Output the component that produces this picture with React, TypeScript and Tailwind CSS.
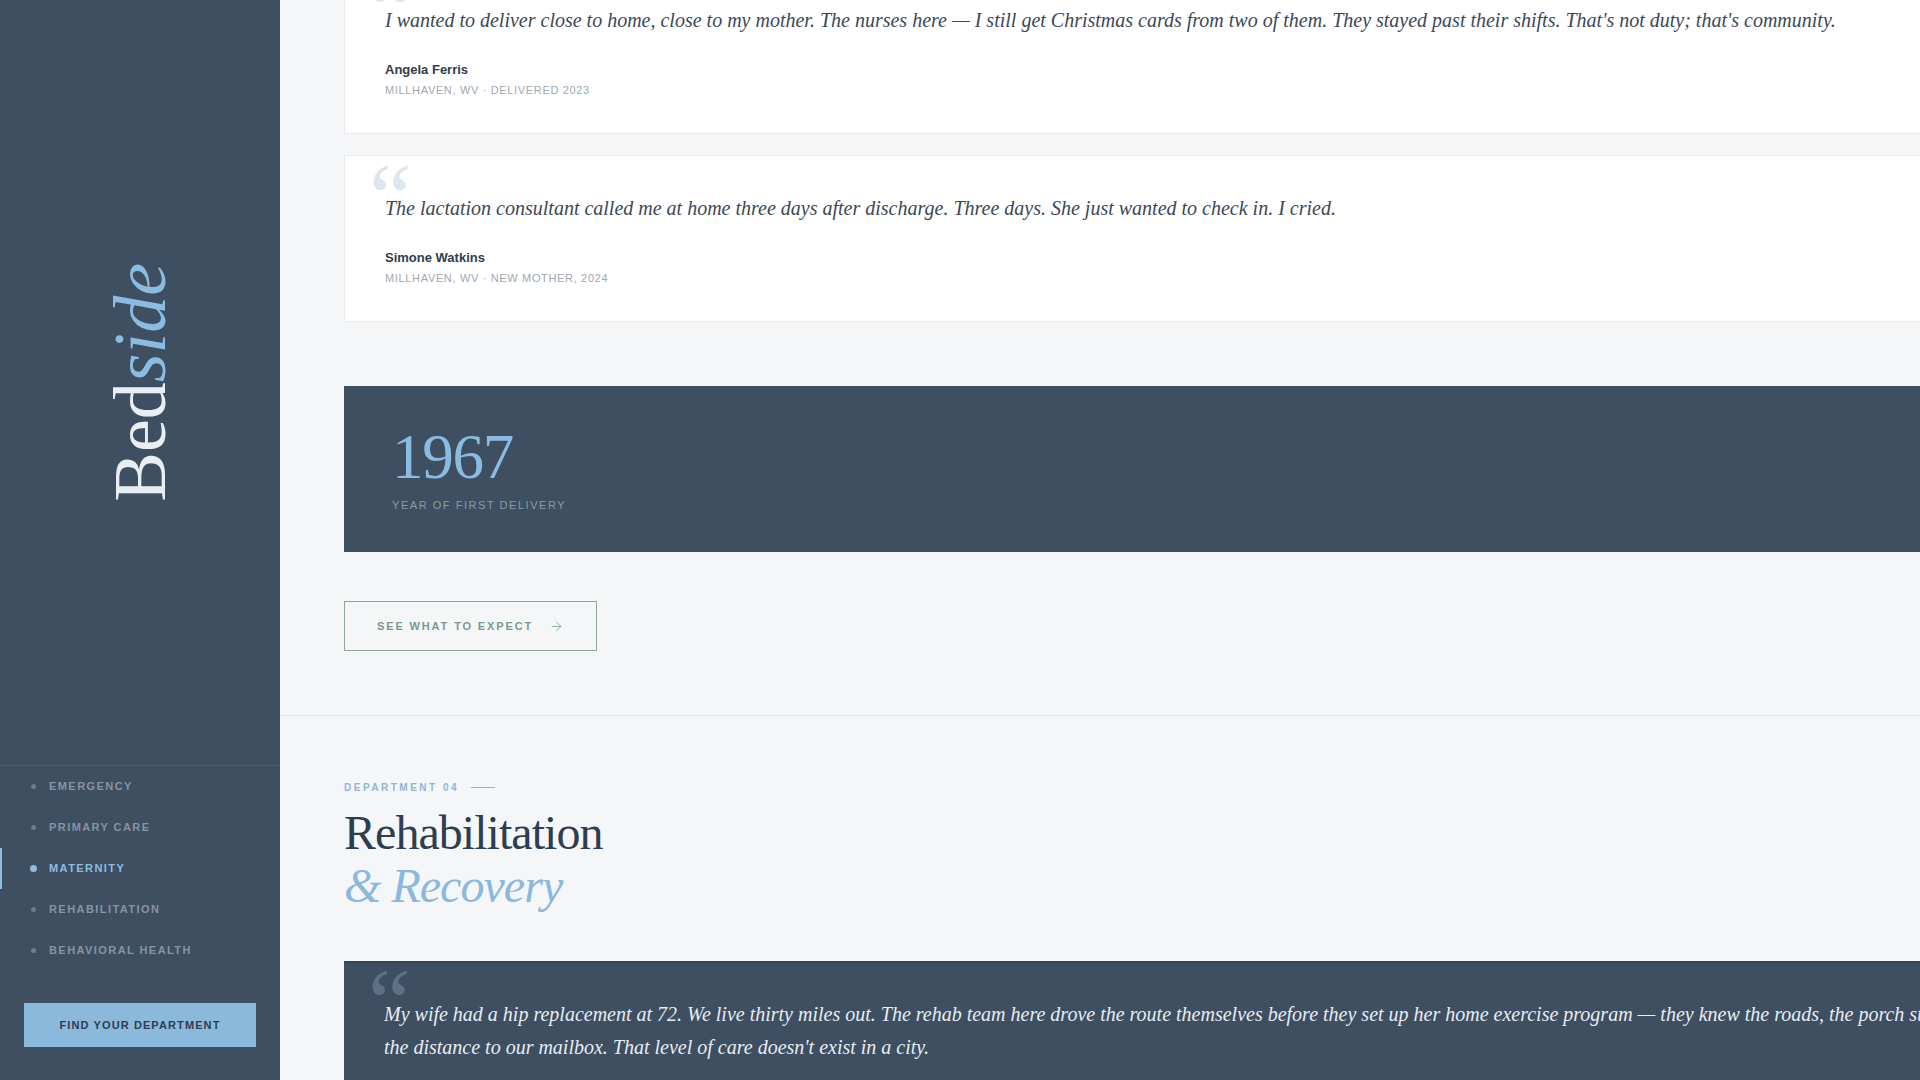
import React from "react";
import { ArrowRight } from "lucide-react";

const serif = "font-['Liberation_Serif',_'Times_New_Roman',_serif]";
const sans = "font-['Liberation_Sans',_Arial,_sans-serif]";

const navItems = [
  { label: "Emergency", active: false },
  { label: "Primary Care", active: false },
  { label: "Maternity", active: true },
  { label: "Rehabilitation", active: false },
  { label: "Behavioral Health", active: false },
];

function QuoteCard({ text, name, meta }: { text: string; name: string; meta: string }) {
  return (
    <div className="relative bg-white border border-[#e7eaee] px-10 pt-9 pb-[35px]">
      <span
        className={`${serif} absolute left-[24px] top-[-7px] text-[96px] leading-none text-[#dbe6f0] select-none`}
      >
        “
      </span>
      <p className={`${serif} relative italic text-[20px] leading-[33px] text-[#3b4857]`}>{text}</p>
      <div className={`${sans} mt-[23px] text-[13px] leading-5 font-bold text-[#2f3d4b]`}>{name}</div>
      <div className={`${sans} mt-0.5 text-[11px] leading-4 tracking-[0.06em] uppercase text-[#9ea8b2]`}>
        {meta}
      </div>
    </div>
  );
}

export default function App() {
  return (
    <div className={`${sans} flex h-screen w-full overflow-hidden bg-[#f4f6f8]`}>
      {/* Sidebar */}
      <aside className="flex w-[280px] shrink-0 flex-col bg-[#3d4f61]">
        <div className="flex flex-1 items-center justify-center border-b border-[#4b5d6f]">
          <div
            className={`${serif} rotate-180 text-[74px] leading-none [writing-mode:vertical-rl] text-[#e9eef2]`}
          >
            Bed<span className="italic text-[#8bbbe0]">side</span>
          </div>
        </div>
        <nav className="flex flex-col">
          {navItems.map((item) => (
            <div
              key={item.label}
              className={`relative flex h-[41px] items-center gap-3 pl-[29px] ${
                item.active ? "text-[#8cbde0]" : "text-[#8794a2]"
              }`}
            >
              {item.active && <span className="absolute left-0 top-0 h-full w-[2px] bg-[#8cbde0]" />}
              <span className="flex w-2 items-center justify-center">
                <span
                  className={
                    item.active
                      ? "h-[7px] w-[7px] rounded-full bg-[#8cbde0]"
                      : "h-[5px] w-[5px] rounded-full bg-[#6d7d8d]"
                  }
                />
              </span>
              <span className="text-[11px] font-bold uppercase tracking-[0.13em]">{item.label}</span>
            </div>
          ))}
        </nav>
        <div className="px-6 pt-8 pb-[33px]">
          <button className="flex h-[44px] w-full items-center justify-center bg-[#8bb9dc] text-[11px] font-bold uppercase tracking-[0.1em] text-[#2c3e50]">
            Find Your Department
          </button>
        </div>
      </aside>

      {/* Main */}
      <main className="min-w-0 flex-1 overflow-hidden">
        <div className="w-[1788px]">
          {/* Maternity section (scrolled) */}
          <section className="border-b border-[#e2e6ea] px-16 pb-16">
            <div className="-mt-[33px] flex flex-col gap-[21px]">
              <QuoteCard
                text="I wanted to deliver close to home, close to my mother. The nurses here — I still get Christmas cards from two of them. They stayed past their shifts. That's not duty; that's community."
                name="Angela Ferris"
                meta="Millhaven, WV · Delivered 2023"
              />
              <QuoteCard
                text="The lactation consultant called me at home three days after discharge. Three days. She just wanted to check in. I cried."
                name="Simone Watkins"
                meta="Millhaven, WV · New Mother, 2024"
              />
            </div>

            <div className="mt-16 bg-[#3d4f61] px-12 pt-[40px] pb-[39px]">
              <div className={`${serif} text-[63px] leading-none tracking-[-0.02em] text-[#8bbbe0]`}>1967</div>
              <div className="mt-2 text-[11px] leading-4 uppercase tracking-[0.14em] text-[#8c99a6]">
                Year of first delivery
              </div>
            </div>

            <div className="mt-[49px]">
              <button className="inline-flex items-center gap-4 border border-[#8ea79d] px-8 py-4 text-[11px] leading-4 font-bold uppercase tracking-[0.17em] text-[#7a9a8e]">
                See what to expect
                <ArrowRight className="h-[15px] w-[15px]" strokeWidth={1.25} />
              </button>
            </div>
          </section>

          {/* Rehabilitation section */}
          <section className="px-16 pt-16">
            <div className="flex items-center gap-3">
              <span className="text-[10px] leading-[15px] font-bold uppercase tracking-[0.25em] text-[#8fb5d3]">
                Department 04
              </span>
              <span className="h-px w-6 bg-[#8fb5d3]" />
            </div>
            <h2 className={`${serif} mt-3 text-[48px] leading-[1.1] tracking-[-0.02em] text-[#2f3e4e]`}>
              Rehabilitation
              <br />
              <span className="italic text-[#8bb9db]">&amp; Recovery</span>
            </h2>

            <div className="relative mt-12 border-t-2 border-[#34475a] bg-[#3d4f61] px-10 pt-[35px] pb-10">
              <span
                className={`${serif} absolute left-[24px] top-[-9px] text-[96px] leading-none text-[#5c7186] select-none`}
              >
                “
              </span>
              <p className={`${serif} relative w-[1580px] italic text-[20px] leading-[33px] text-[#e8edf2]`}>
                My wife had a hip replacement at 72. We live thirty miles out. The rehab team here drove the route
                themselves before they set up her home exercise program — they knew the roads, the porch steps, the
                distance to our mailbox. That level of care doesn't exist in a city.
              </p>
            </div>
          </section>
        </div>
      </main>
    </div>
  );
}
